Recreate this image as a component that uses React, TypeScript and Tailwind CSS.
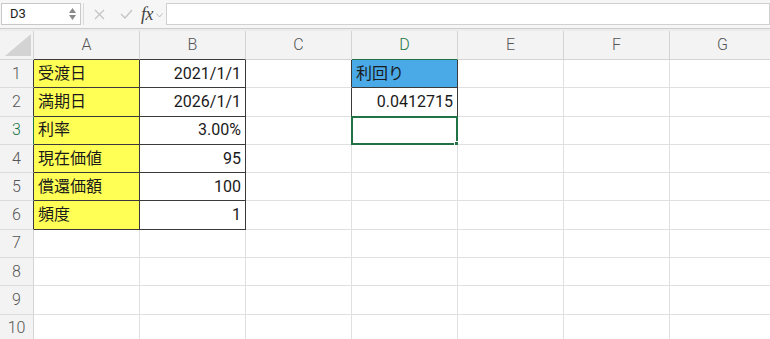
import React from 'react'

const COLS = ['A', 'B', 'C', 'D', 'E', 'F', 'G']
const DARK = '#3a3a3a'
const GRID = '#e0e0e0'

type Cell = {
  text?: string
  align?: 'left' | 'right'
  bg?: string
}

const data: Record<string, Cell> = {
  A1: { text: '受渡日', bg: '#ffff55' },
  A2: { text: '満期日', bg: '#ffff55' },
  A3: { text: '利率', bg: '#ffff55' },
  A4: { text: '現在価値', bg: '#ffff55' },
  A5: { text: '償還価額', bg: '#ffff55' },
  A6: { text: '頻度', bg: '#ffff55' },
  B1: { text: '2021/1/1', align: 'right' },
  B2: { text: '2026/1/1', align: 'right' },
  B3: { text: '3.00%', align: 'right' },
  B4: { text: '95', align: 'right' },
  B5: { text: '100', align: 'right' },
  B6: { text: '1', align: 'right' },
  D1: { text: '利回り', bg: '#4aaae8' },
  D2: { text: '0.0412715', align: 'right' },
}

// which cells carry a dark right / bottom edge
function edges(col: string, row: number) {
  const inAB = (col === 'A' || col === 'B') && row <= 6
  const inD = col === 'D' && row <= 2
  const right = inAB || inD || (col === 'C' && row <= 2)
  const bottom = inAB || inD
  return { right, bottom }
}

function FormulaBar() {
  return (
    <div className="h-[29px] bg-[#f6f6f6] border-b border-[#cdcdcd] flex items-center pl-px pr-0">
      <div className="w-[80px] h-[22px] bg-white border border-[#c8c8c8] flex items-center justify-between pl-[8px] pr-[4px]">
        <span className="text-[13px] text-[#222]">D3</span>
        <div className="flex flex-col items-center gap-[2px]">
          <svg width="7" height="5" viewBox="0 0 7 5"><path d="M3.5 0 L7 5 L0 5 Z" fill="#8a8a8a" /></svg>
          <svg width="7" height="5" viewBox="0 0 7 5"><path d="M0 0 L7 0 L3.5 5 Z" fill="#8a8a8a" /></svg>
        </div>
      </div>
      <div className="w-[1px] h-[22px] bg-[#dadada] ml-[2px]" />
      <div className="flex items-center ml-[10px] gap-[15px]">
        <svg width="11" height="11" viewBox="0 0 11 11">
          <path d="M1 1 L10 10 M10 1 L1 10" stroke="#c4c4c4" strokeWidth="1.3" />
        </svg>
        <svg width="13" height="10" viewBox="0 0 13 10">
          <path d="M1 5 L5 9 L12 1" stroke="#c4c4c4" strokeWidth="1.3" fill="none" />
        </svg>
      </div>
      <div className="flex items-center ml-[8px]">
        <span className="text-[18px] leading-none italic text-[#444] font-['Liberation_Serif',serif] tracking-tight">fx</span>
        <svg width="7" height="5" viewBox="0 0 7 5" className="ml-[3px] mt-[3px]">
          <path d="M0.5 0.5 L3.5 4 L6.5 0.5" stroke="#bcbcbc" strokeWidth="1" fill="none" />
        </svg>
      </div>
      <div className="flex-1 h-[22px] bg-white border border-[#d0d0d0] ml-[3px]" />
    </div>
  )
}

function HeaderRow() {
  return (
    <div className="flex h-[29px] bg-[#f3f3f3]">
      <div className="w-[34px] shrink-0 border-r border-b border-[#d4d4d4] relative">
        <svg className="absolute right-[2px] bottom-[3px]" width="26" height="22" viewBox="0 0 26 22">
          <path d="M26 0 L26 22 L0 22 Z" fill="#d3d3d3" />
        </svg>
      </div>
      {COLS.map((c) => (
        <div
          key={c}
          className={`w-[106px] shrink-0 flex items-center justify-center border-r border-b text-[16px] font-light ${
            c === 'D'
              ? 'text-[#217346] border-r-[#d4d4d4] border-b-[#217346]'
              : c === 'A' || c === 'B'
                ? 'text-[#555] border-r-[#d4d4d4] border-b-[#3a3a3a]'
                : 'text-[#555] border-[#d4d4d4]'
          }`}
        >
          {c}
        </div>
      ))}
    </div>
  )
}

function Row({ row }: { row: number }) {
  const selectedRow = row === 3
  return (
    <div className="flex h-[28.3px]">
      <div
        className={`w-[34px] shrink-0 flex items-center justify-center border-r border-b border-b-[#dcdcdc] bg-[#f3f3f3] text-[16px] font-light ${
          selectedRow
            ? 'text-[#217346] border-r-[#217346]'
            : row <= 6
              ? 'text-[#555] border-r-[#3a3a3a]'
              : 'text-[#555] border-r-[#d4d4d4]'
        }`}
      >
        {row}
      </div>
      {COLS.map((c) => {
        const key = `${c}${row}`
        const cell = data[key]
        const { right, bottom } = edges(c, row)
        const selected = key === 'D3'
        return (
          <div
            key={key}
            className="w-[106px] shrink-0 relative flex items-center px-[4px] text-[16px] text-[#1a1a1a]"
            style={{
              background: cell?.bg ?? '#fff',
              borderRight: `1px solid ${right ? DARK : GRID}`,
              borderBottom: `1px solid ${bottom ? DARK : GRID}`,
              justifyContent: cell?.align === 'right' ? 'flex-end' : 'flex-start',
            }}
          >
            {cell?.text}
            {selected && (
              <>
                <div className="absolute -left-[1px] -top-[1px] -right-[1px] -bottom-[1px] border-2 border-[#217346]" />
                <div className="absolute -right-[3px] -bottom-[3px] w-[6px] h-[6px] bg-[#217346] border border-white" />
              </>
            )}
          </div>
        )
      })}
    </div>
  )
}

export default function App() {
  return (
    <div className="w-[770px] h-[339px] overflow-hidden bg-white font-['Roboto','Noto_Sans_CJK_JP',sans-serif]">
      <FormulaBar />
      <div className="h-[2px] bg-[#ececec]" />
      <HeaderRow />
      {Array.from({ length: 10 }, (_, i) => (
        <Row key={i} row={i + 1} />
      ))}
    </div>
  )
}
